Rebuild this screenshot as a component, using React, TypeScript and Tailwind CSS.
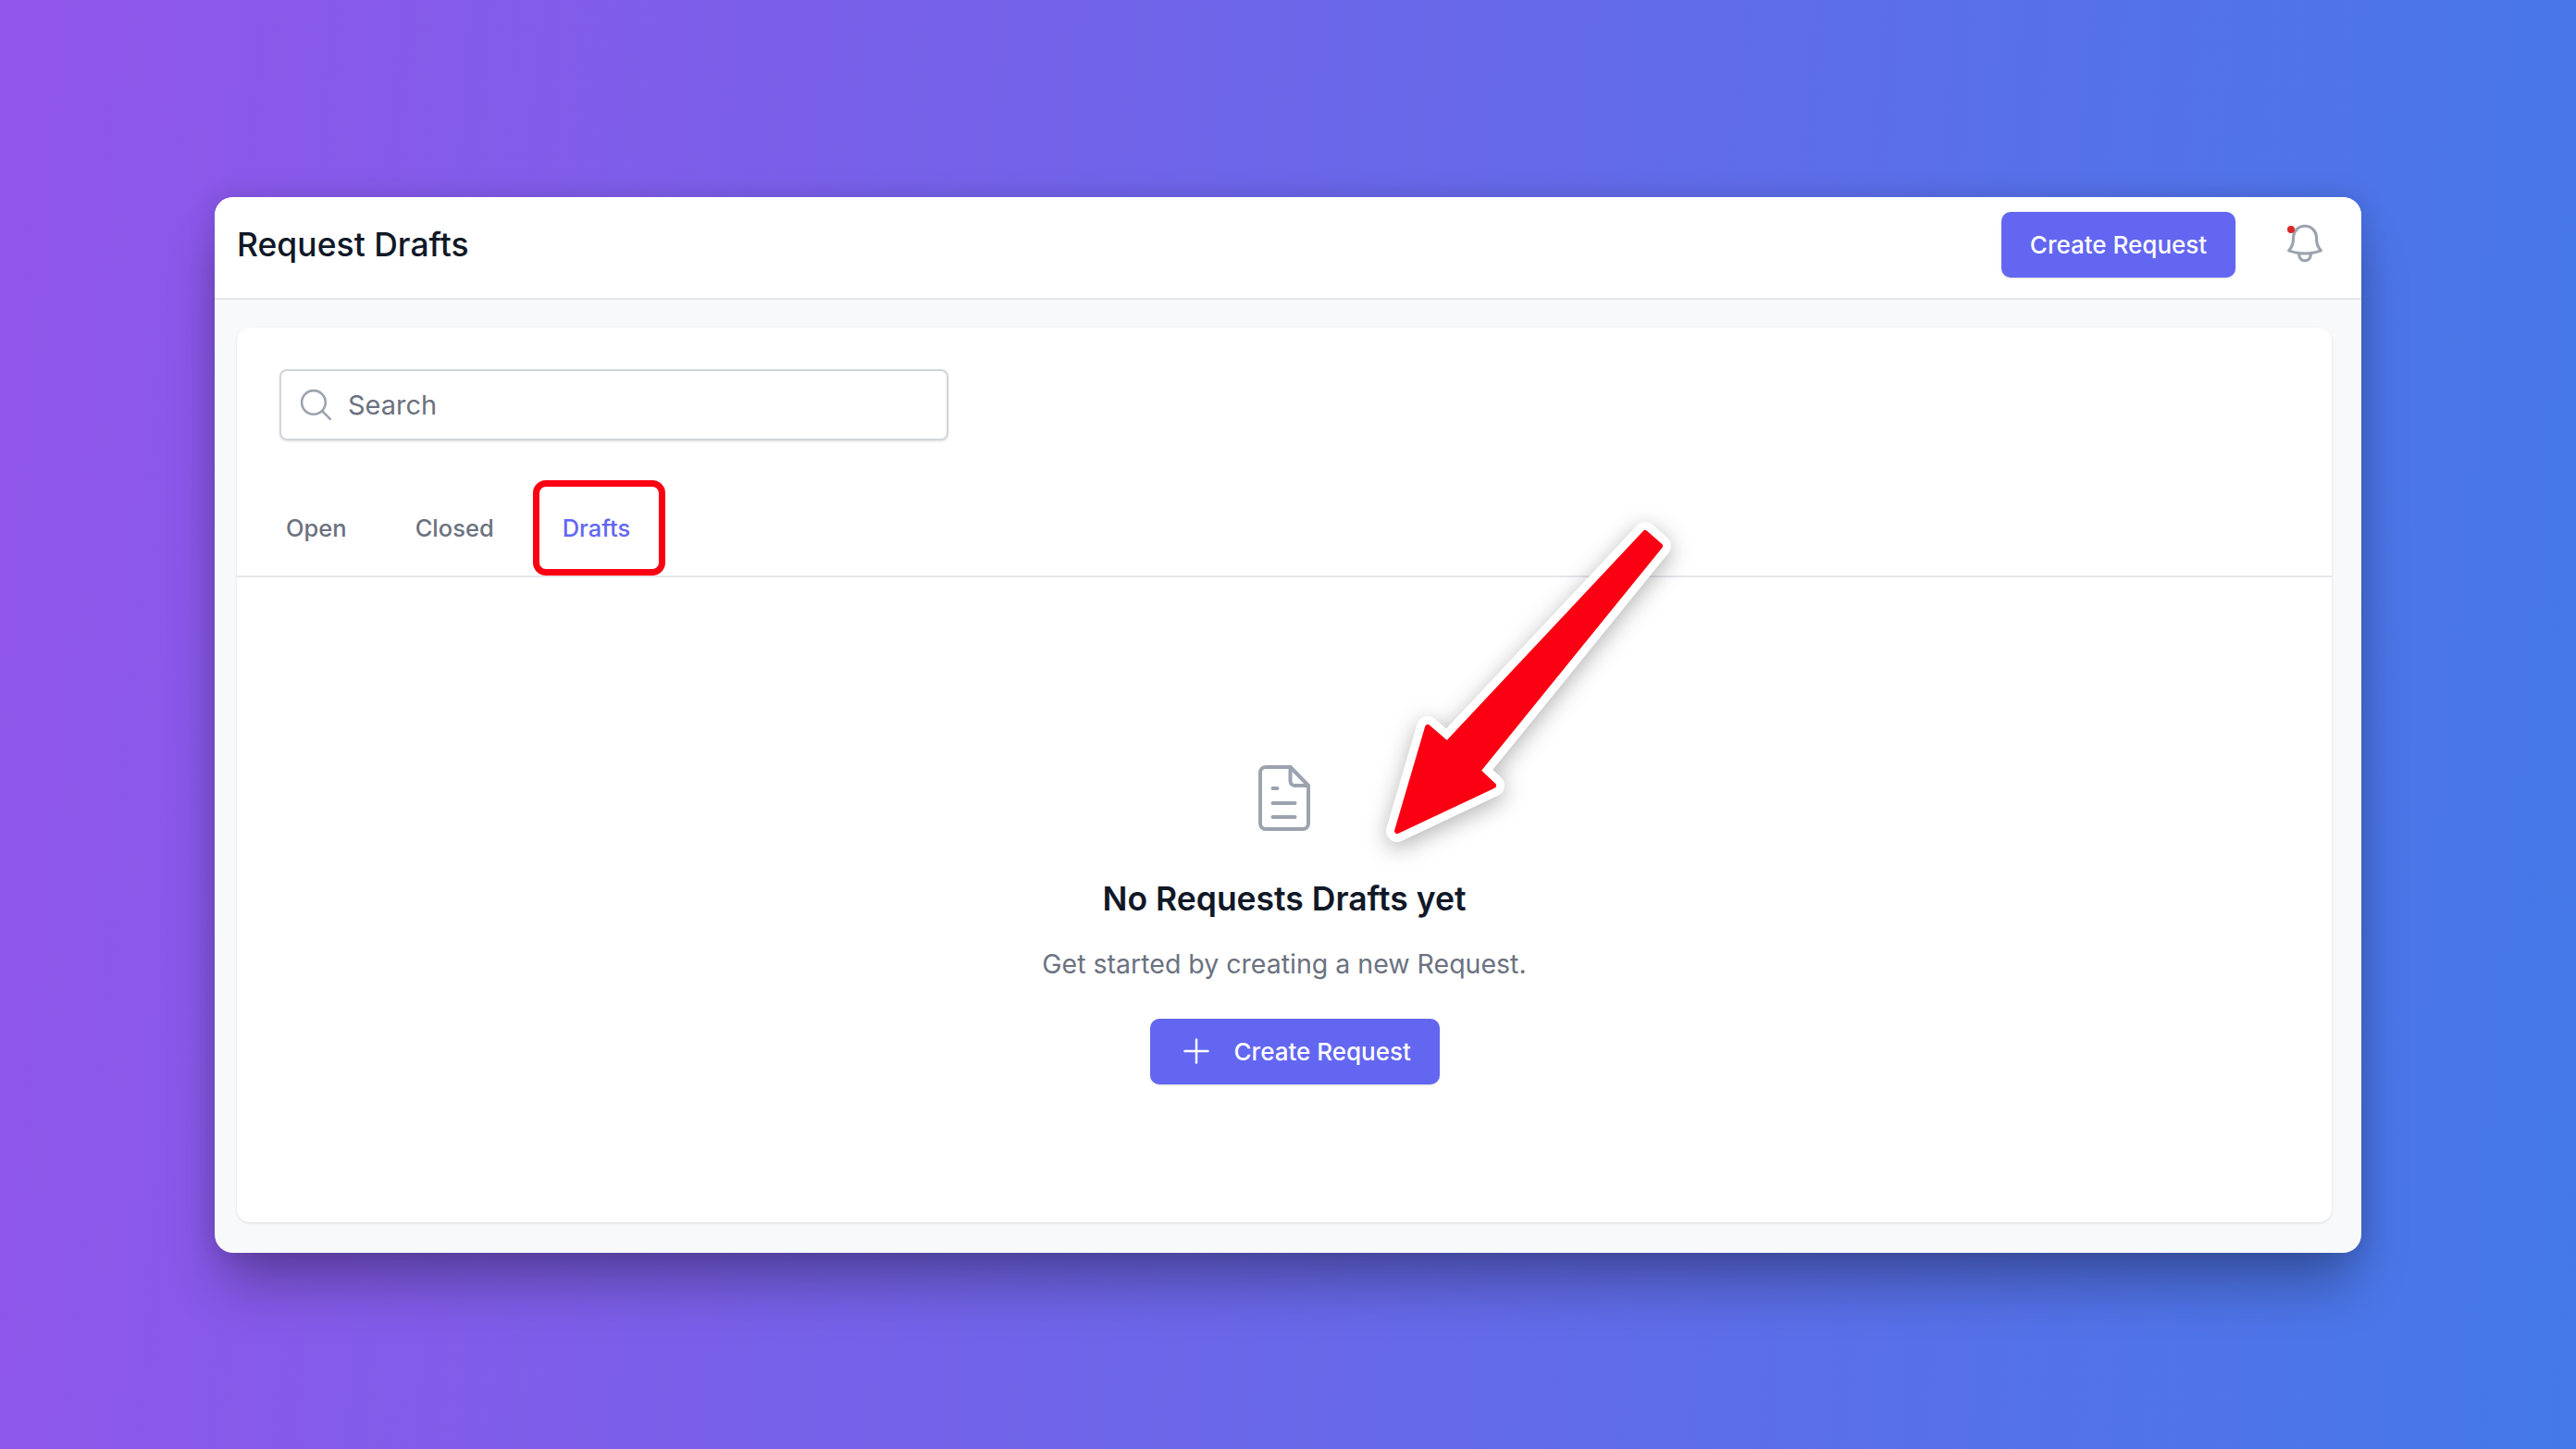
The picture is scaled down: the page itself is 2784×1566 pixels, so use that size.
const tabs = ['Open', 'Closed'];

const arrowPoints = '1778,576 1794,590 1597,833 1614,849 1510,898 1543,786 1564,804';

function DocIcon() {
  return (
    <svg viewBox="0 0 56 71" className="h-[71px] w-[56px]" fill="none" stroke="#9ca3af" strokeWidth="4" strokeLinecap="round" strokeLinejoin="round">
      <path d="M8 2h26.5L54 22v41a6 6 0 0 1-6 6H8a6 6 0 0 1-6-6V8a6 6 0 0 1 6-6z" />
      <path d="M34.5 2V17a5 5 0 0 0 5 5H54" />
      <path d="M15.5 25h5M15.5 41h24M15.5 56h24" />
    </svg>
  );
}

function PrimaryButton({ plus }: { plus?: boolean }) {
  return (
    <button
      className={`flex h-[71px] items-center rounded-[10px] bg-[#6366f1] text-[26px] font-medium text-white shadow-sm ${
        plus ? 'w-[313px] pl-[30px]' : 'w-[253px] justify-center'
      }`}
    >
      {plus && (
        <svg viewBox="0 0 24 24" className="mr-[21px] h-[40px] w-[40px]" fill="none" stroke="currentColor" strokeWidth="1.5" strokeLinecap="round">
          <path d="M12 4.5v15m7.5-7.5h-15" />
        </svg>
      )}
      Create Request
    </button>
  );
}

export default function App() {
  return (
    <div className="relative flex h-[1566px] w-full items-center justify-center overflow-hidden bg-[linear-gradient(95deg,#9155ea,#4479e8)] font-[Inter,sans-serif]">
      <div className="flex h-[1141px] w-[2320px] flex-col overflow-hidden rounded-[20px] bg-[#f8f9fb] shadow-[0_0_30px_rgba(0,0,0,0.14),0_42px_60px_-10px_rgba(0,0,0,0.3)]">
        <header className="flex h-[111px] shrink-0 items-center justify-between border-b-2 border-[#e5e7eb] bg-white pb-[5px] pl-[24px] pr-[136px]">
          <h1 className="text-[35.5px] font-medium text-[#111827]">Request Drafts</h1>
          <div className="relative">
            <PrimaryButton />
            <div className="absolute left-[303px] top-[9px]">
              <svg viewBox="0 0 24 24" className="h-[50px] w-[50px]" fill="none" stroke="#9ca3af" strokeWidth="1.5" strokeLinecap="round" strokeLinejoin="round">
                <path d="M14.857 17.082a23.848 23.848 0 005.454-1.31A8.967 8.967 0 0118 9.75v-.7V9A6 6 0 006 9v.75a8.967 8.967 0 01-2.312 6.022c1.733.64 3.56 1.085 5.455 1.31m5.714 0a24.255 24.255 0 01-5.714 0m5.714 0a3 3 0 11-5.714 0" />
              </svg>
              <span className="absolute left-[6px] top-[6px] h-[8px] w-[8px] rounded-full bg-[#dc2626]" />
            </div>
          </div>
        </header>

        <main className="flex flex-1 flex-col pb-[33px] pl-[24px] pr-[32px] pt-[30px]">
          <section className="flex flex-1 flex-col rounded-[14px] bg-white shadow-[0_1px_3px_rgba(0,0,0,0.12)]">
            <div className="px-[46px] pt-[45px]">
              <div className="flex h-[77px] w-[723px] items-center rounded-[8px] border-2 border-[#d1d5db] pl-[17px] shadow-sm">
                <svg viewBox="0 0 24 24" className="mr-[14px] h-[41px] w-[41px]" fill="none" stroke="#9ca3af" strokeWidth="1.5" strokeLinecap="round">
                  <path d="M21 21l-5.197-5.197m0 0A7.5 7.5 0 105.196 5.196a7.5 7.5 0 0010.607 10.607z" />
                </svg>
                <span className="pt-[2px] text-[29px] text-[#6b7280]">Search</span>
              </div>
            </div>

            <nav className="mt-[43px] flex h-[105px] items-center gap-[74px] border-b-2 border-[#e5e7eb] pl-[53px] pt-[2px] text-[25.5px] font-medium text-[#6b7280]">
              {tabs.map((t) => (
                <span key={t}>{t}</span>
              ))}
              <span className="relative text-[#6366f1]">
                Drafts
                <span className="absolute -left-[32px] -top-[33px] h-[103px] w-[143px] rounded-[14px] border-[7px] border-[#fb0012]" />
              </span>
            </nav>

            <div className="flex flex-1 flex-col items-center pt-[203px]">
              <DocIcon />
              <h2 className="mt-[52px] text-[35.5px] font-semibold leading-[44px] text-[#111827]">No Requests Drafts yet</h2>
              <p className="mt-[28px] text-[28.5px] leading-[40px] text-[#6b7280]">Get started by creating a new Request.</p>
              <div className="ml-[22px] mt-[39px]">
                <PrimaryButton plus />
              </div>
            </div>
          </section>
        </main>
      </div>

      <svg className="pointer-events-none absolute inset-0 h-full w-full drop-shadow-[0_6px_12px_rgba(0,0,0,0.3)]" viewBox="0 0 2784 1566">
        <polygon points={arrowPoints} fill="#fff" stroke="#fff" strokeWidth="24" strokeLinejoin="round" />
        <polygon points={arrowPoints} fill="#fb0012" stroke="#fb0012" strokeWidth="6" strokeLinejoin="round" />
      </svg>
    </div>
  );
}
